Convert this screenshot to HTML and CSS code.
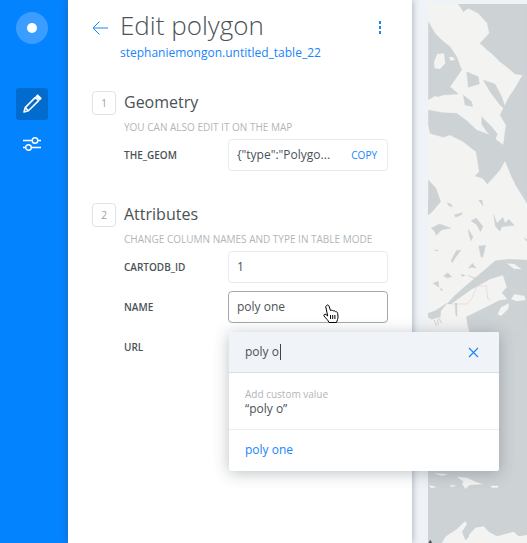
FILE: index.html
```html
<!DOCTYPE html>
<html lang="en">
<head>
    <meta charset="UTF-8">
    <meta name="viewport" content="width=device-width, initial-scale=1.0">
    <title>Edit polygon</title>
    <link rel="stylesheet" href="styles.css">
</head>
<body>
    <aside class="sidebar">
        <div class="logo"><span class="logo-dot"></span></div>
        <a class="side-btn side-btn-active" href="#edit">
            <svg width="20" height="20" viewBox="0 0 20 20" fill="none" stroke="#fff" stroke-width="1.6" stroke-linejoin="round">
                <path d="M2 18 L3.2 13.6 L13.4 3.4 L16.6 6.6 L6.4 16.8 Z" />
                <path d="M14.6 2.2 L15.6 1.2 L18.8 4.4 L17.8 5.4 Z" fill="#fff" />
                <path d="M3.2 13.6 L6.4 16.8" />
            </svg>
        </a>
        <a class="side-btn" href="#style">
            <svg width="20" height="18" viewBox="0 0 20 18" fill="none" stroke="#fff" stroke-width="1.4">
                <path d="M1 5.5 H10 M16 5.5 H19 M1 12.5 H3.5 M9.5 12.5 H19" />
                <circle cx="13" cy="5.5" r="2.8" />
                <circle cx="6.5" cy="12.5" r="2.8" />
            </svg>
        </a>
    </aside>

    <main class="panel">
        <header class="panel-header">
            <a class="back" href="#back">
                <svg width="16" height="14" viewBox="0 0 16 14" fill="none" stroke="#1785fb" stroke-width="1">
                    <path d="M16 7 H1 M7.5 0.5 L1 7 L7.5 13.5" />
                </svg>
            </a>
            <div class="heading">
                <h1 class="title">Edit polygon</h1>
                <a class="subtitle" href="#table">stephaniemongon.untitled_table_22</a>
            </div>
            <div class="kebab"><span></span><span></span><span></span></div>
        </header>

        <section class="section section-geometry">
            <div class="step">1</div>
            <div class="section-body">
                <h2 class="section-title">Geometry</h2>
                <p class="section-desc">You can also edit it on the map</p>
                <div class="field">
                    <label class="field-label">the_geom</label>
                    <div class="input input-geom">
                        <span class="geom-value">{"type":"Polygo...</span>
                        <a class="copy" href="#copy">COPY</a>
                    </div>
                </div>
            </div>
        </section>

        <section class="section">
            <div class="step">2</div>
            <div class="section-body">
                <h2 class="section-title">Attributes</h2>
                <p class="section-desc">Change column names and type in table mode</p>
                <div class="field">
                    <label class="field-label">cartodb_id</label>
                    <div class="input">1</div>
                </div>
                <div class="field">
                    <label class="field-label">name</label>
                    <div class="input input-active">poly one</div>
                </div>
                <div class="field">
                    <label class="field-label">url</label>
                    <div class="input-spacer"></div>
                </div>
            </div>
        </section>
    </main>

    <div class="gutter"></div>

    <div class="map">
        <svg width="99" height="539" viewBox="428 4 99 539">
            <g fill="#cdd2d5" stroke="#cdd2d5" stroke-width="1" stroke-linejoin="round">
                <rect x="428" y="334" width="99" height="209" />
                <g transform="translate(400 0) scale(.3333)">
                    <path d="M175 12 H381 V610 L350 560 L335 530 L315 482 L300 510 L262 552 L248 535 L225 528 L238 515 L228 455 L190 425 L150 405 L130 412 L90 400 L85 372 V330 L130 338 L170 340 L200 362 L230 390 L270 405 L310 435 L318 375 L300 345 L325 295 L345 265 L368 225 L345 222 L320 200 L300 185 L280 165 L262 150 L240 130 L268 100 L262 70 L235 40 L205 25 L190 35 Z" />
                    <path d="M85 65 L105 100 L125 120 L150 140 L170 170 L185 210 L150 260 L175 282 L130 285 L100 295 L85 300 Z" />
                    <path d="M200 215 L235 230 L238 252 L205 262 Z" />
                    <path d="M190 285 L215 305 L218 320 L195 315 Z" />
                    <path d="M245 350 L275 380 L292 402 L285 420 L260 395 L245 372 Z" />
                    <path d="M250 240 L285 252 L305 290 L318 330 L300 315 L270 275 Z" />
                    <path d="M85 540 L108 565 L122 605 L100 630 L85 645 Z" />
                </g>
                <g transform="translate(427 200) scale(.3333)">
                    <path d="M3 0 H40 L20 30 L3 45 Z" />
                    <path d="M60 8 L72 12 L76 20 L66 18 Z" />
                    <path d="M155 0 H165 L168 18 Z" />
                    <path d="M82 44 L106 38 L104 44 L86 52 Z" />
                    <path d="M12 85 L38 72 L72 84 L44 90 L28 106 L22 92 Z" />
                    <path d="M132 62 L148 54 L168 80 L160 95 L150 75 Z" />
                    <path d="M200 44 L210 70 L228 52 L234 70 L245 58 L262 76 L225 80 L218 94 L205 78 Z" />
                    <path d="M124 88 L138 110 L132 122 L126 105 Z" />
                    <path d="M155 138 L176 136 L168 170 L162 172 Z" />
                    <path d="M72 182 L88 152 L102 150 L86 172 L76 188 Z" />
                    <path d="M22 150 H34 L30 154 Z" />
                    <path d="M124 205 L136 190 L148 205 L135 202 Z" />
                    <path d="M50 228 L62 218 L74 230 L60 234 Z" />
                    <path d="M18 250 L34 244 L36 262 Z" />
                    <path d="M40 264 L48 270 L42 272 Z" />
                    <path d="M102 222 L114 226 L106 230 Z" />
                    <path d="M122 226 L150 236 L146 238 Z" />
                    <path d="M290 114 L300 118 V124 Z" />
                    <path d="M84 310 L90 310 L90 350 L86 345 Z" />
                    <path d="M3 340 L25 332 L60 310 L42 332 L40 350 L15 358 L3 352 Z" />
                    <path d="M22 360 L28 378 M32 358 L34 376 M36 354 L44 370" fill="none" stroke-width="3" />
                    <path d="M300 180 L245 178 L205 182 L170 212 L125 250 L85 285 L60 312 L72 312 L130 270 L190 237 L228 225 L240 262 L270 272 L300 292 Z" />
                    <path d="M240 262 L270 272 L300 292 V405 H130 L122 375 L118 350 L150 335 L185 318 L215 302 L242 298 L225 278 Z" />
                </g>
            </g>
            <g fill="#f3f3f2">
                <g transform="translate(400 0) scale(.3333)">
                    <path d="M102 185 L112 162 L132 160 L136 190 L120 207 L104 205 Z" />
                    <path d="M146 172 L158 170 L166 180 L152 182 Z" />
                    <path d="M85 300 L105 288 L130 298 L125 322 L100 332 L85 322 Z" />
                </g>
                <g transform="translate(427 200) scale(.3333)">
                    <path d="M240 190 L262 192 L284 208 L260 206 Z" />
                    <path d="M212 342 L222 322 L246 310 L244 326 L222 348 Z" />
                    <path d="M252 298 L262 282 L292 288 L296 300 L270 304 Z" />
                </g>
                <g transform="translate(427 465) scale(.3333)">
                    <path d="M20 25 L65 27 L45 33 Z" />
                    <path d="M90 35 L120 38 L145 50 L168 58 L128 60 L115 72 L105 56 L110 50 Z" />
                    <path d="M5 60 L30 66 L12 70 Z" />
                    <path d="M70 60 L90 62 L72 67 Z" />
                    <path d="M190 62 L215 62 L212 68 L195 68 Z" />
                    <path d="M45 234 L55 215 L90 192 L115 168 L120 178 L105 200 L115 226 L130 205 L145 188 L170 184 L185 200 L210 214 L260 200 L275 214 L300 210 V234 Z" />
                </g>
            </g>
            <g transform="translate(427 465) scale(.3333)">
                <path d="M110 200 L122 192 L126 215 L116 226 Z" fill="#cdd2d5" />
                <path d="M115 231 H300 V234 H115 Z" fill="#f3f3f2" />
                <path d="M4 234 L10 224 L15 234 Z" fill="#4a5258" />
            </g>
            <g transform="translate(427 200) scale(.3333)" fill="none" stroke="#e8cfcf" stroke-width="2">
                <path d="M72 312 L120 312 L135 295 L150 258 L178 258 L182 295 L190 300" />
            </g>
        </svg>
    </div>

    <div class="dropdown">
        <div class="dropdown-search">
            <span class="search-text">poly o</span>
            <svg width="11" height="11" viewBox="0 0 11 11" stroke="#1785fb" stroke-width="1.1">
                <path d="M1 1 L10 10 M10 1 L1 10" />
            </svg>
        </div>
        <div class="dropdown-custom">
            <div class="custom-label">Add custom value</div>
            <div class="custom-value">“poly o”</div>
        </div>
        <div class="dropdown-option">poly one</div>
    </div>

    <svg class="cursor" width="16" height="20" viewBox="0 0 16 20" fill="#fff" stroke="#000" stroke-width="1" stroke-linejoin="round">
        <path d="M3.5 1.5 C4.5 0.5 5.5 1 6 2 L7.5 6.5 C8.5 6 9.5 6 10 7 C11 6.5 12 6.7 12.5 7.7 C13.5 7.5 14.5 8 14.7 9.5 L15 13 C15 15 14 16.5 13.5 18.5 H6 C5.5 16.5 3 14.5 1 12 C0.5 11 1.5 9.5 3 10.5 L4.7 12 L2.8 3 C2.7 2.5 3 2 3.5 1.5 Z" />
        <path d="M7.5 11 V15 M9.7 11 V15 M11.9 11 V15" fill="none" />
    </svg>
</body>
</html>
```

FILE: styles.css
```css
* {
    margin: 0;
    padding: 0;
    box-sizing: border-box;
}

html, body {
    height: 100%;
}

body {
    font-family: 'Open Sans', sans-serif;
    color: #4a5258;
    background: #eff3f7;
    display: flex;
    overflow: hidden;
    position: relative;
}

a {
    text-decoration: none;
    color: #1785fb;
}

.sidebar {
    width: 68px;
    flex: none;
    background: #0483ff;
    display: flex;
    flex-direction: column;
    padding: 12px 0 0 16px;
}

.logo {
    width: 32px;
    height: 32px;
    border-radius: 50%;
    background: #3a9dff;
    display: flex;
    align-items: center;
    justify-content: center;
    margin-bottom: 44px;
}

.logo-dot {
    width: 10px;
    height: 10px;
    border-radius: 50%;
    background: #fff;
}

.side-btn {
    width: 32px;
    height: 32px;
    border-radius: 3px;
    display: flex;
    align-items: center;
    justify-content: center;
    margin-bottom: 8px;
}

.side-btn-active {
    background: #026cce;
}

.panel {
    width: 344px;
    flex: none;
    background: #fff;
    padding: 0 24px;
    box-shadow: 0 0 7px rgba(60, 70, 80, 0.45);
    position: relative;
}

.panel-header {
    display: flex;
    align-items: flex-start;
    height: 91px;
    padding-top: 7px;
}

.back {
    width: 28px;
    flex: none;
    margin-top: 14px;
    line-height: 0;
}

.heading {
    flex: 1;
}

.title {
    font-size: 26px;
    font-weight: 300;
    line-height: 37px;
    color: #4a5258;
}

.subtitle {
    display: block;
    font-size: 12px;
    line-height: 16px;
    margin-top: 1px;
}

.kebab {
    display: flex;
    flex-direction: column;
    gap: 2px;
    margin-top: 14px;
    margin-right: 7px;
}

.kebab span {
    width: 2px;
    height: 3px;
    background: #1785fb;
}

.section {
    display: flex;
}

.section-geometry {
    margin-bottom: 32px;
}

.step {
    width: 24px;
    height: 24px;
    flex: none;
    border: 1px solid #dfe3e6;
    border-radius: 4px;
    font-size: 10px;
    line-height: 22px;
    text-align: center;
    color: #9a9fa3;
    margin-right: 8px;
}

.section-body {
    flex: 1;
}

.section-title {
    font-size: 16px;
    font-weight: 400;
    line-height: 22px;
    color: #4a5258;
}

.section-desc {
    font-size: 10px;
    line-height: 14px;
    text-transform: uppercase;
    color: #b2b6b9;
    margin-top: 7px;
    margin-bottom: 5px;
}

.field {
    display: flex;
    align-items: center;
    margin-bottom: 8px;
}

.section-geometry .field {
    margin-bottom: 0;
}

.field-label {
    width: 104px;
    flex: none;
    font-size: 10px;
    font-weight: 600;
    text-transform: uppercase;
    color: #4a5258;
}

.input {
    flex: 1;
    height: 32px;
    border: 1px solid #e8ebee;
    border-radius: 4px;
    padding: 0 8px;
    font-size: 12px;
    line-height: 30px;
    color: #4a5258;
    display: flex;
    justify-content: space-between;
}

.input-active {
    border-color: #a4a8ab;
}

.input-spacer {
    flex: 1;
    height: 32px;
}

.copy {
    font-size: 10px;
    font-weight: 400;
    margin-right: 2px;
}

.gutter {
    width: 16px;
    flex: none;
}

.map {
    flex: 1;
    margin-top: 4px;
    background: #f3f3f2;
    line-height: 0;
}

.dropdown {
    position: absolute;
    left: 229px;
    top: 332px;
    width: 270px;
    height: 139px;
    background: #fff;
    border-radius: 2px;
    box-shadow: 0 2px 16px rgba(40, 50, 60, 0.3);
    display: flex;
    flex-direction: column;
    overflow: hidden;
}

.dropdown-search {
    height: 41px;
    flex: none;
    background: #f0f3f7;
    border-bottom: 1px solid #dcdfe2;
    display: flex;
    align-items: center;
    justify-content: space-between;
    padding: 0 20px 0 16px;
    font-size: 12px;
}

.search-text {
    border-right: 1px solid #3e454a;
    line-height: 16px;
    padding-right: 1px;
}

.dropdown-custom {
    height: 57px;
    flex: none;
    border-bottom: 1px solid #ebedef;
    padding: 14px 16px 0;
}

.custom-label {
    font-size: 10px;
    line-height: 14px;
    color: #b2b6b9;
}

.custom-value {
    font-size: 12px;
    line-height: 16px;
    color: #4a5258;
}

.dropdown-option {
    flex: 1;
    padding: 12px 16px 0;
    font-size: 12px;
    line-height: 16px;
    color: #1785fb;
}

.cursor {
    position: absolute;
    left: 323px;
    top: 304px;
}
```
